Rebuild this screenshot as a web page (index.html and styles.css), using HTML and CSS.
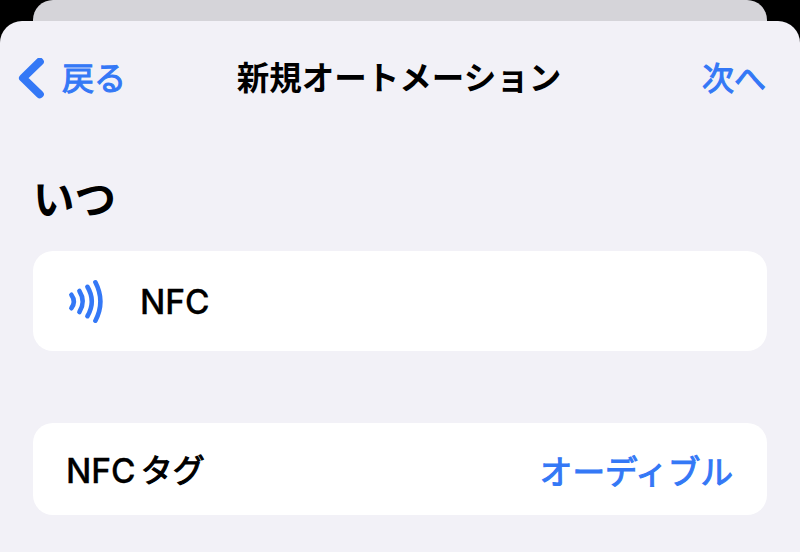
FILE: index.html
```html
<!DOCTYPE html>
<html lang="ja">

<head>
    <meta charset="utf-8">
    <title>新規オートメーション</title>

    <link rel="stylesheet" href="styles.css">
</head>

<body>
    <div class="backSheet"></div>
    <div class="sheet">
        <div class="navBar">
            <a class="navButton back">
                <svg class="chevron" width="26" height="42" viewBox="0 0 26 42">
                    <path d="M21.8 3.7 L5 20 L21.8 36.3"/>
                </svg>
                <span>戻る</span>
            </a>
            <h1 class="title">新規オートメーション</h1>
            <a class="navButton next">次へ</a>
        </div>

        <h2 class="sectionTitle">いつ</h2>

        <div class="card trigger">
            <svg class="nfcIcon" width="36" height="44" viewBox="0 0 36 44">
                <path d="M4.4 15.8 Q9.2 22.5 4.4 29.2"/>
                <path d="M12.4 12 Q19 22.5 12.4 33"/>
                <path d="M20.4 7.8 Q29.2 22.5 20.4 37.2"/>
                <path d="M28.4 3.3 Q38.4 22.5 28.4 41.7"/>
            </svg>
            <span class="latin">NFC</span>
        </div>

        <div class="card tag">
            <span class="label"><span class="latin">NFC</span><span class="kana">タグ</span></span>
            <span class="value">オーディブル</span>
        </div>
    </div>
</body>

</html>
```

FILE: styles.css
```css
* {
    box-sizing: border-box;
}

body {
    margin: 0;
    height: 552px;
    overflow: hidden;
    background: #000;
    color: #000;
    font-family: Inter, "Noto Sans CJK JP", sans-serif;
}

.backSheet {
    height: 21px;
    margin: 0 33px;
    border-radius: 20px 20px 0 0;
    background: #d5d4d9;
}

.sheet {
    height: 531px;
    padding: 0 33px;
    border-radius: 22px 22px 0 0;
    background: #f2f1f7;
}

.navBar {
    display: grid;
    grid-template-columns: 1fr auto 1fr;
    align-items: center;
    height: 115px;
    margin: 0 -15px;
}

.navButton {
    display: flex;
    align-items: center;
    color: #3478f6;
    font-size: 32px;
    line-height: 48px;
    -webkit-text-stroke: 1.1px #3478f6;
}

.back {
    gap: 18px;
}

.next {
    justify-content: flex-end;
    padding-right: 16px;
}

.chevron {
    fill: none;
    stroke: #3478f6;
    stroke-width: 8;
    stroke-linecap: round;
    stroke-linejoin: round;
}

.title {
    margin: 0 2px 0 0;
    padding-top: 1px;
    font-size: 32.5px;
    font-weight: bold;
    line-height: 48px;
}

.sectionTitle {
    height: 115px;
    margin: 0;
    padding-top: 34px;
    font-size: 41.5px;
    font-weight: bold;
    line-height: 60px;
}

.card {
    display: flex;
    align-items: center;
    padding: 0 34px;
    border-radius: 20px;
    background: #fff;
}

.trigger {
    height: 100px;
    gap: 37px;
}

.tag {
    justify-content: space-between;
    height: 92px;
    margin-top: 72px;
    padding-top: 2px;
    padding-left: 33px;
}

.nfcIcon {
    fill: none;
    stroke: #3478f6;
    stroke-width: 4.6;
    stroke-linecap: round;
}

.latin {
    font-size: 33.5px;
    font-weight: 500;
    line-height: 42px;
    padding-top: 1px;
    -webkit-text-stroke: 0.3px #000;
}

.label {
    display: flex;
    align-items: center;
    gap: 5px;
}

.kana {
    font-size: 32px;
    line-height: 46px;
    padding-top: 1px;
    -webkit-text-stroke: 1.1px #000;
}

.value {
    color: #3478f6;
    font-size: 32.6px;
    line-height: 46px;
    padding-top: 3px;
    -webkit-text-stroke: 1.1px #3478f6;
}
```
